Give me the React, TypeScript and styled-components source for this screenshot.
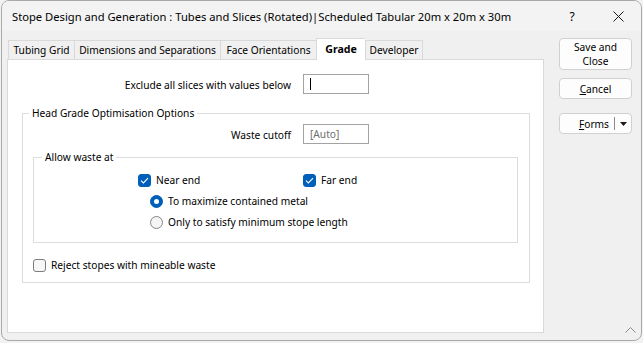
import React from "react";
import styled, { createGlobalStyle } from "styled-components";

const GlobalStyle = createGlobalStyle`
  html, body {
    margin: 0;
    padding: 0;
  }
  body {
    background: #f2f2f2;
    font-family: "Noto Sans", "Segoe UI", sans-serif;
    font-size: 10.2px;
    color: #000;
  }
  * {
    box-sizing: border-box;
  }
`;

const Page = styled.div`
  width: 643px;
  height: 343px;
  padding-left: 1px;
`;

const Window = styled.div`
  position: relative;
  width: 641px;
  height: 341px;
  border: 1px solid #a9a9a9;
  border-radius: 8px;
  background: #f0f0f0;
  overflow: hidden;
  display: flex;
  flex-direction: column;
`;

const TitleBar = styled.div`
  height: 30px;
  display: flex;
  align-items: center;
  padding-left: 10px;
  background: #f3f3f3;
  font-size: 11.2px;
`;

const Title = styled.div`
  flex: 1;
  white-space: nowrap;
  overflow: hidden;
`;

const TitleButton = styled.div`
  width: 46px;
  height: 100%;
  display: flex;
  align-items: center;
  justify-content: center;
  font-size: 12px;
`;

const Body = styled.div`
  flex: 1;
  display: flex;
  padding: 7px 0 0 5px;
`;

const TabArea = styled.div`
  width: 537px;
  display: flex;
  flex-direction: column;
`;

const TabStrip = styled.div`
  position: relative;
  z-index: 1;
  height: 22px;
  margin-left: 1px;
  display: flex;
  align-items: flex-end;
`;

const Tab = styled.div<{ $width: number; $active?: boolean; $last?: boolean }>`
  width: ${(p) => p.$width}px;
  height: ${(p) => (p.$active ? 22 : 19)}px;
  margin-bottom: ${(p) => (p.$active ? 0 : 1)}px;
  display: flex;
  align-items: center;
  justify-content: center;
  padding-bottom: ${(p) => (p.$active ? 2 : 0)}px;
  white-space: nowrap;
  border: 1px solid #d9d9d9;
  border-bottom: none;
  border-right: ${(p) => (p.$last ? "1px solid #d9d9d9" : "none")};
  background: ${(p) => (p.$active ? "#ffffff" : "#f0f0f0")};
  font-weight: ${(p) => (p.$active ? 700 : 400)};
  font-size: ${(p) => (p.$active ? "10.6px" : "inherit")};
`;

const Panel = styled.div`
  height: 274px;
  margin-top: -1px;
  border: 1px solid #d9d9d9;
  background: #ffffff;
  padding-top: 14px;
`;

const FieldRow = styled.div<{ $labelWidth: number }>`
  display: grid;
  grid-template-columns: ${(p) => p.$labelWidth}px 66px;
  column-gap: 12px;
  align-items: center;
  height: 20px;
`;

const FieldLabel = styled.div`
  text-align: right;
  white-space: nowrap;
  padding-top: 2px;
`;

const TextBox = styled.div<{ $muted?: boolean }>`
  height: 20px;
  border: 1px solid #a3a3a3;
  background: #fff;
  display: flex;
  align-items: center;
  padding-left: 6px;
  color: ${(p) => (p.$muted ? "#6e6e6e" : "#000")};
`;

const Caret = styled.span`
  width: 1px;
  height: 12px;
  background: #000;
`;

const Group = styled.fieldset<{ $margin: string; $padding: string }>`
  margin: ${(p) => p.$margin};
  padding: ${(p) => p.$padding};
  border: 1px solid #dcdcdc;
  min-width: 0;
`;

const Legend = styled.legend<{ $offset: number }>`
  margin-left: ${(p) => p.$offset}px;
  padding: 0 3px;
  line-height: 15px;
  white-space: nowrap;
`;

const OptionStack = styled.div`
  display: flex;
  flex-direction: column;
  gap: 1px;
`;

const OptionRow = styled.div<{ $indent: number; $top?: number }>`
  height: 20px;
  display: flex;
  align-items: center;
  padding-left: ${(p) => p.$indent}px;
  margin-top: ${(p) => p.$top ?? 0}px;
`;

const OptionItem = styled.label<{ $width?: number }>`
  display: flex;
  align-items: center;
  gap: 5px;
  white-space: nowrap;
  width: ${(p) => (p.$width ? `${p.$width}px` : "auto")};
`;

const CheckBox = styled.span<{ $checked?: boolean }>`
  width: 13px;
  height: 13px;
  border-radius: 3px;
  flex: none;
  display: flex;
  align-items: center;
  justify-content: center;
  background: ${(p) => (p.$checked ? "#005fb8" : "#f7f7f7")};
  border: 1px solid ${(p) => (p.$checked ? "#005fb8" : "#7d7d7d")};
`;

const Radio = styled.span<{ $checked?: boolean }>`
  width: 13px;
  height: 13px;
  border-radius: 50%;
  flex: none;
  display: flex;
  align-items: center;
  justify-content: center;
  background: ${(p) => (p.$checked ? "#005fb8" : "#f5f5f5")};
  border: 1px solid ${(p) => (p.$checked ? "#005fb8" : "#858585")};
  &::after {
    content: "";
    display: ${(p) => (p.$checked ? "block" : "none")};
    width: 5px;
    height: 5px;
    border-radius: 50%;
    background: #fff;
  }
`;

const RightColumn = styled.div`
  width: 73px;
  margin-left: 15px;
  display: flex;
  flex-direction: column;
`;

const Button = styled.div<{ $height: number; $gap: number }>`
  height: ${(p) => p.$height}px;
  margin-top: ${(p) => p.$gap}px;
  border: 1px solid #d0d0d0;
  border-radius: 4px;
  background: #fdfdfd;
  display: flex;
  align-items: center;
  justify-content: center;
  text-align: center;
  line-height: 14px;
`;

const SplitLabel = styled.div`
  flex: 1;
  text-align: right;
  padding-right: 5px;
`;

const SplitDivider = styled.span`
  width: 1px;
  height: 13px;
  background: #8c8c8c;
`;

const SplitArrow = styled.div`
  width: 16px;
  display: flex;
  justify-content: center;
`;

const Grip = styled.svg`
  position: absolute;
  right: 5px;
  bottom: 7px;
`;

const Check = () => (
  <svg width="9" height="7" viewBox="0 0 9 7">
    <path d="M1 3.6 L3.4 6 L8 1.2" fill="none" stroke="#fff" strokeWidth="1.1" />
  </svg>
);

export default function App() {
  return (
    <Page>
      <GlobalStyle />
      <Window>
        <TitleBar>
          <Title>
            Stope Design and Generation : Tubes and Slices (Rotated)|Scheduled Tabular 20m x 20m x 30m
          </Title>
          <TitleButton>?</TitleButton>
          <TitleButton>
            <svg width="11" height="11" viewBox="0 0 11 11">
              <path d="M0.5 0.5 L10.5 10.5 M10.5 0.5 L0.5 10.5" stroke="#1a1a1a" strokeWidth="1" />
            </svg>
          </TitleButton>
        </TitleBar>
        <Body>
          <TabArea>
            <TabStrip>
              <Tab $width={66}>Tubing Grid</Tab>
              <Tab $width={146}>Dimensions and Separations</Tab>
              <Tab $width={96}>Face Orientations</Tab>
              <Tab $width={49} $active>
                Grade
              </Tab>
              <Tab $width={58} $last>
                Developer
              </Tab>
            </TabStrip>
            <Panel>
              <FieldRow $labelWidth={283}>
                <FieldLabel>Exclude all slices with values below</FieldLabel>
                <TextBox>
                  <Caret />
                </TextBox>
              </FieldRow>
              <Group $margin="12px 13px 0 14px" $padding="3px 0 7px 0">
                <Legend $offset={6}>Head Grade Optimisation Options</Legend>
                <FieldRow $labelWidth={268}>
                  <FieldLabel>Waste cutoff</FieldLabel>
                  <TextBox $muted>[Auto]</TextBox>
                </FieldRow>
                <Group $margin="6px 11px 0 10px" $padding="5px 0 10px 0">
                  <Legend $offset={8}>Allow waste at</Legend>
                  <OptionStack>
                    <OptionRow $indent={104}>
                      <OptionItem $width={165}>
                        <CheckBox $checked>
                          <Check />
                        </CheckBox>
                        Near end
                      </OptionItem>
                      <OptionItem>
                        <CheckBox $checked>
                          <Check />
                        </CheckBox>
                        Far end
                      </OptionItem>
                    </OptionRow>
                    <OptionRow $indent={116}>
                      <OptionItem>
                        <Radio $checked />
                        To maximize contained metal
                      </OptionItem>
                    </OptionRow>
                    <OptionRow $indent={116}>
                      <OptionItem>
                        <Radio />
                        Only to satisfy minimum stope length
                      </OptionItem>
                    </OptionRow>
                  </OptionStack>
                </Group>
                <OptionRow $indent={10} $top={12}>
                  <OptionItem>
                    <CheckBox />
                    Reject stopes with mineable waste
                  </OptionItem>
                </OptionRow>
              </Group>
            </Panel>
          </TabArea>
          <RightColumn>
            <Button $height={32} $gap={0}>
              Save and
              <br />
              Close
            </Button>
            <Button $height={21} $gap={8}>
              <span>
                <u>C</u>ancel
              </span>
            </Button>
            <Button $height={21} $gap={14}>
              <SplitLabel>
                <u>F</u>orms
              </SplitLabel>
              <SplitDivider />
              <SplitArrow>
                <svg width="7" height="4" viewBox="0 0 7 4">
                  <path d="M0 0 H7 L3.5 4 Z" fill="#1a1a1a" />
                </svg>
              </SplitArrow>
            </Button>
          </RightColumn>
        </Body>
        <Grip width="11" height="6" viewBox="0 0 11 6">
          <path d="M0.5 5.5 L5.5 0.5 L10.5 5.5" fill="none" stroke="#8a8a8a" strokeWidth="1" />
        </Grip>
      </Window>
    </Page>
  );
}
